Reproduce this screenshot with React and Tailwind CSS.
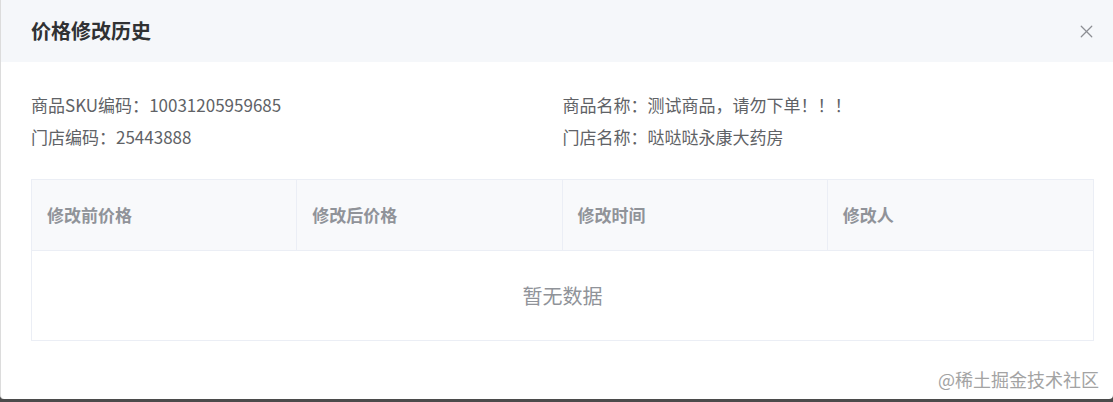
import { X } from "lucide-react";

const font = { fontFamily: '"Noto Sans CJK SC", "Noto Sans", sans-serif' };

const info = [
  ["商品SKU编码：", "10031205959685"],
  ["商品名称：", "测试商品，请勿下单！！！"],
  ["门店编码：", "25443888"],
  ["门店名称：", "哒哒哒永康大药房"],
];

const columns = ["修改前价格", "修改后价格", "修改时间", "修改人"];

export default function App() {
  return (
    <div className="w-[1113px] h-[402px] bg-[#4b4b4b] overflow-hidden" style={font}>
      <div className="relative h-[399px] bg-white border-l border-[#dcdcdc] rounded-b-[4px] flex flex-col">
        {/* header */}
        <div className="h-[62px] bg-[#f5f7fa] flex items-center justify-between pl-[30px] pr-[12px]">
          <h1 className="text-[20px] font-bold text-[#303133] leading-none">价格修改历史</h1>
          <button className="text-[#8c8e93] p-1">
            <X size={21} strokeWidth={1.4} />
          </button>
        </div>

        {/* body */}
        <div className="pl-[30px] pr-[19px] pt-[31px]">
          <div className="grid grid-cols-2 gap-y-[8px] text-[17px] text-[#606266] leading-[24px]">
            {info.map(([label, value]) => (
              <div key={label}>
                {label}
                {value}
              </div>
            ))}
          </div>

          <div className="mt-[30px] border border-[#ebeef5]">
            <div className="grid grid-cols-4 h-[71px] bg-[#f8f9fb] border-b border-[#ebeef5]">
              {columns.map((c, i) => (
                <div
                  key={c}
                  className={`flex items-center pl-[15px] text-[17px] font-bold text-[#909399] ${
                    i < 3 ? "border-r border-[#ebeef5]" : ""
                  }`}
                >
                  {c}
                </div>
              ))}
            </div>
            <div className="h-[89px] flex items-center justify-center text-[20px] text-[#909399]">
              暂无数据
            </div>
          </div>
        </div>

        {/* watermark */}
        <div className="absolute right-[14px] bottom-[11px] text-[18px] text-[#a3a3a3] leading-none">
          @稀土掘金技术社区
        </div>
      </div>
    </div>
  );
}
